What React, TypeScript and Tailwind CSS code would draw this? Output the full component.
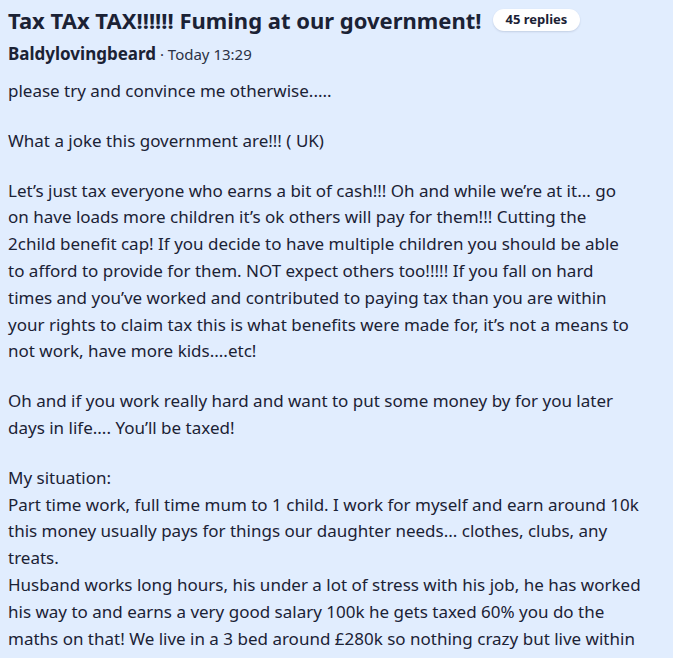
type Paragraph = { lines: string[]; tight?: boolean };

const paragraphs: Paragraph[] = [
  { lines: ["please try and convince me otherwise....."] },
  { lines: ["What a joke this government are!!! ( UK)"] },
  {
    tight: true,
    lines: [
      "Let’s just tax everyone who earns a bit of cash!!! Oh and while we’re at it... go on have loads more children it’s ok others will pay for them!!! Cutting the 2child benefit cap! If you decide to have multiple children you should be able to afford to provide for them. NOT expect others too!!!!! If you fall on hard times and you’ve worked and contributed to paying tax than you are within your rights to claim tax this is what benefits were made for, it’s not a means to not work, have more kids....etc!",
    ],
  },
  { lines: ["Oh and if you work really hard and want to put some money by for you later days in life.... You’ll be taxed!"] },
  {
    lines: [
      "My situation:",
      "Part time work, full time mum to 1 child. I work for myself and earn around 10k this money usually pays for things our daughter needs... clothes, clubs, any treats.",
      "Husband works long hours, his under a lot of stress with his job, he has worked his way to and earns a very good salary 100k he gets taxed 60% you do the maths on that! We live in a 3 bed around £280k so nothing crazy but live within our means.",
    ],
  },
];

const ThreadHeader = () => {
  return (
    <div className="flex items-center gap-[11px]">
      <h1 className="text-[22px] leading-[30px] font-bold whitespace-nowrap">
        Tax TAx TAX!!!!!! Fuming at our government!
      </h1>
      <span className="rounded-full bg-white px-[13px] h-[22px] flex items-center text-[13px] font-bold shadow-[0_1px_2px_rgba(30,40,80,0.15)]">
        45 replies
      </span>
    </div>
  );
};

export default function App() {
  return (
    <div className="min-h-screen bg-[#e1edfe] text-[#1b2235] font-['Noto_Sans',sans-serif]">
      <div className="w-[648px] pl-2 pt-[5px]">
        <ThreadHeader />
        <div className="mt-[5px] leading-[27px]">
          <span className="text-[17px] font-bold">Baldylovingbeard</span>
          <span className="text-[15px] text-[#2b3245]"> · Today 13:29</span>
        </div>
        <div className="mt-[10px] text-[17px] leading-[26.8px]">
          {paragraphs.map((p, i) => (
            <p key={i} className={p.tight ? "mb-[23px] pr-[12px]" : "mb-[23px]"}>
              {p.lines.map((line, j) => (
                <span key={j}>
                  {j > 0 && <br />}
                  {line}
                </span>
              ))}
            </p>
          ))}
        </div>
      </div>
    </div>
  );
}
